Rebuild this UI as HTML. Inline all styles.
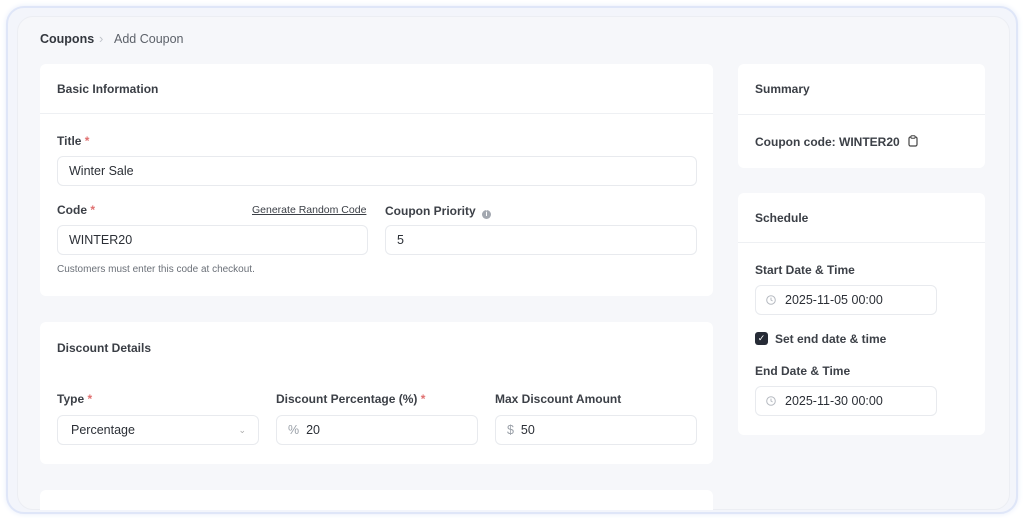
<!DOCTYPE html>
<html><head><meta charset="utf-8"><style>
*{box-sizing:border-box;margin:0;padding:0}
body{width:1024px;height:518px;background:#fff;font-family:"Liberation Sans",sans-serif;color:#2b2f36;position:relative;overflow:hidden}
.frame{position:absolute;left:6px;top:6px;width:1012px;height:508px;border:2px solid #dfe6f8;border-radius:18px;background:#f3f5fb;box-shadow:0 0 6px #e6ecfa}
.panel{position:absolute;left:17px;top:16px;width:993px;height:494px;background:#f6f7fa;border-radius:16px;border:1px solid #eceef3}
.card{position:absolute;background:#fff;border-radius:6px}
.t{position:absolute;font-size:12px;font-weight:bold;color:#3a3e45}
.lbl{position:absolute;font-size:12px;font-weight:bold;color:#3c4047}
.req{color:#e07070}
.in{position:absolute;height:30px;border:1px solid #e8eaee;border-radius:6px;background:#fff;font-size:12.5px;color:#2b2f36;padding-left:11px;line-height:28px}
.hr{position:absolute;height:1px;background:#eef0f3}
.g{color:#9aa0a8}
.clk{display:inline-block;vertical-align:-1px;margin-right:9px}
</style></head><body>
<div class="frame"></div>
<div class="panel"></div>
<div style="position:absolute;left:40px;top:32px;font-size:12.5px;font-weight:bold;color:#33373e">Coupons</div>
<div style="position:absolute;left:99px;top:31px;font-size:13px;color:#c0c4ca">›</div>
<div style="position:absolute;left:114px;top:32px;font-size:12.5px;color:#5d626a">Add Coupon</div>

<div class="card" style="left:40px;top:64px;width:673px;height:232px"></div>
<div class="t" style="left:57px;top:82px">Basic Information</div>
<div class="hr" style="left:40px;top:113px;width:673px"></div>
<div class="lbl" style="left:57px;top:134px">Title <span class="req">*</span></div>
<div class="in" style="left:57px;top:156px;width:640px">Winter Sale</div>
<div class="lbl" style="left:57px;top:203px">Code <span class="req">*</span></div>
<div style="position:absolute;left:252px;top:204px;font-size:10.5px;color:#3a3e45;text-decoration:underline">Generate Random Code</div>
<div class="in" style="left:57px;top:225px;width:311px">WINTER20</div>
<div style="position:absolute;left:57px;top:264px;font-size:10px;color:#6b7078">Customers must enter this code at checkout.</div>
<div class="lbl" style="left:385px;top:204px">Coupon Priority <span style="display:inline-block;width:9px;height:9px;border-radius:50%;background:#a3a8b0;vertical-align:-1px;margin-left:3px;color:#fff;font-size:7px;line-height:9px;text-align:center">i</span></div>
<div class="in" style="left:385px;top:225px;width:312px">5</div>

<div class="card" style="left:40px;top:322px;width:673px;height:142px"></div>
<div class="t" style="left:57px;top:341px">Discount Details</div>
<div class="lbl" style="left:57px;top:392px">Type <span class="req">*</span></div>
<div class="in" style="left:57px;top:415px;width:202px;padding-left:13px">Percentage<span style="position:absolute;right:12px;top:0;font-size:9px;color:#aaa">&#8964;</span></div>
<div class="lbl" style="left:276px;top:392px">Discount Percentage (%) <span class="req">*</span></div>
<div class="in" style="left:276px;top:415px;width:202px"><span class="g">%</span>&nbsp; 20</div>
<div class="lbl" style="left:495px;top:392px">Max Discount Amount</div>
<div class="in" style="left:495px;top:415px;width:202px"><span class="g">$</span>&nbsp; 50</div>

<div class="card" style="left:40px;top:490px;width:673px;height:20px;border-radius:6px 6px 0 0"></div>

<div class="card" style="left:738px;top:64px;width:247px;height:104px"></div>
<div class="t" style="left:755px;top:82px">Summary</div>
<div class="hr" style="left:738px;top:114px;width:247px"></div>
<div class="lbl" style="left:755px;top:135px">Coupon code: WINTER20
<svg width="10" height="12" viewBox="0 0 10 12" style="vertical-align:-1px;margin-left:5px"><rect x="1" y="2" width="8" height="9" rx="1.5" fill="none" stroke="#444" stroke-width="1.2"/><rect x="3" y="0.8" width="4" height="2.4" rx="0.6" fill="#fff" stroke="#444" stroke-width="1"/></svg></div>

<div class="card" style="left:738px;top:193px;width:247px;height:242px"></div>
<div class="t" style="left:755px;top:211px">Schedule</div>
<div class="hr" style="left:738px;top:242px;width:247px"></div>
<div class="lbl" style="left:755px;top:263px">Start Date &amp; Time</div>
<div class="in" style="left:755px;top:285px;width:182px;padding-left:10px"><svg class="clk" width="10" height="10" viewBox="0 0 10 10"><circle cx="5" cy="5" r="4.3" fill="none" stroke="#b5b9c0"/><path d="M5 2.6V5l1.6 1" fill="none" stroke="#b5b9c0"/></svg>2025-11-05 00:00</div>
<div style="position:absolute;left:755px;top:332px;width:13px;height:13px;background:#262b36;border-radius:3px;color:#fff;font-size:9px;text-align:center;line-height:13px">✓</div>
<div class="lbl" style="left:775px;top:332px">Set end date &amp; time</div>
<div class="lbl" style="left:755px;top:364px">End Date &amp; Time</div>
<div class="in" style="left:755px;top:386px;width:182px;padding-left:10px"><svg class="clk" width="10" height="10" viewBox="0 0 10 10"><circle cx="5" cy="5" r="4.3" fill="none" stroke="#b5b9c0"/><path d="M5 2.6V5l1.6 1" fill="none" stroke="#b5b9c0"/></svg>2025-11-30 00:00</div>
</body></html>
